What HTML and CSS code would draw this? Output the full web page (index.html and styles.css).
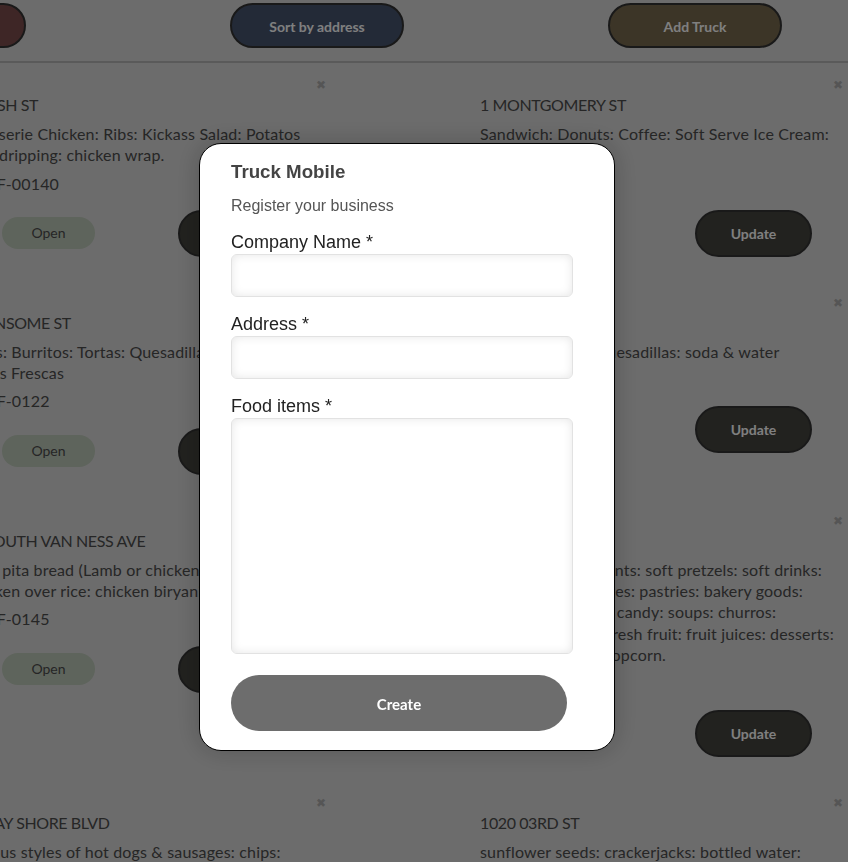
FILE: index.html
```html
<!DOCTYPE html>
<html lang="en">
<head>
<meta charset="utf-8">
<title>Truck Mobile</title>
<link rel="stylesheet" href="styles.css">
</head>
<body>
<div class="page">
  <header class="topbar">
    <button class="pill-btn btn-red">Sort by name</button>
    <button class="pill-btn btn-navy">Sort by address</button>
    <button class="pill-btn btn-olive">Add Truck</button>
  </header>
  <main class="grid">
    <article class="card">
      <div class="close-row"><span class="close">&#10006;</span></div>
      <h2 class="title">1 BUSH ST</h2>
      <p class="food">Rotisserie Chicken: Ribs: Kickass Salad: Potatos with dripping: chicken wrap.</p>
      <p class="permit">2MFF-00140</p>
      <div class="actions"><span class="status">Open</span><button class="update">Update</button></div>
    </article>
    <article class="card">
      <div class="close-row"><span class="close">&#10006;</span></div>
      <h2 class="title">1 MONTGOMERY ST</h2>
      <p class="food">Sandwich: Donuts: Coffee: Soft Serve Ice Cream: Muffins</p>
      <p class="permit">2MFF-00151</p>
      <div class="actions"><span class="status">Open</span><button class="update">Update</button></div>
    </article>
    <article class="card">
      <div class="close-row"><span class="close">&#10006;</span></div>
      <h2 class="title">1 SANSOME ST</h2>
      <p class="food">Tacos: Burritos: Tortas: Quesadillas: Champurrado: Aguas Frescas</p>
      <p class="permit">1MFF-0122</p>
      <div class="actions"><span class="status">Open</span><button class="update">Update</button></div>
    </article>
    <article class="card">
      <div class="close-row"><span class="close">&#10006;</span></div>
      <h2 class="title">101 MISSION ST</h2>
      <p class="food">Tacos: Burritos: Quesadillas: soda &amp; water</p>
      <p class="permit">1MFF-0118</p>
      <div class="actions"><span class="status">Open</span><button class="update">Update</button></div>
    </article>
    <article class="card">
      <div class="close-row"><span class="close">&#10006;</span></div>
      <h2 class="title">10 SOUTH VAN NESS AVE</h2>
      <p class="food">Gyro pita bread (Lamb or chicken): Lamb over rice: Chicken over rice: chicken biryani</p>
      <p class="permit">1MFF-0145</p>
      <div class="actions"><span class="status">Open</span><button class="update">Update</button></div>
    </article>
    <article class="card">
      <div class="close-row"><span class="close">&#10006;</span></div>
      <h2 class="title">50 FREMONT ST</h2>
      <p class="food">Hot dogs: condiments: soft pretzels: soft drinks: cold &amp; hot beverages: pastries: bakery goods: sandwiches: chips: candy: soups: churros: quesadillas: nuts: fresh fruit: fruit juices: desserts: tamales: nachos: popcorn.</p>
      <p class="permit">1MFF-0160</p>
      <div class="actions"><span class="status">Open</span><button class="update">Update</button></div>
    </article>
    <article class="card">
      <div class="close-row"><span class="close">&#10006;</span></div>
      <h2 class="title">10 BAY SHORE BLVD</h2>
      <p class="food">Various styles of hot dogs &amp; sausages: chips: beverages</p>
      <p class="permit">1MFF-0170</p>
      <div class="actions"><span class="status">Open</span><button class="update">Update</button></div>
    </article>
    <article class="card">
      <div class="close-row"><span class="close">&#10006;</span></div>
      <h2 class="title">1020 03RD ST</h2>
      <p class="food">sunflower seeds: crackerjacks: bottled water: peanuts:</p>
      <p class="permit">1MFF-0175</p>
      <div class="actions"><span class="status">Open</span><button class="update">Update</button></div>
    </article>
  </main>
</div>

<div class="overlay"></div>

<form class="modal">
  <h3 class="modal-title">Truck Mobile</h3>
  <p class="modal-sub">Register your business</p>
  <label class="field-label" for="company">Company Name *</label>
  <input class="field" id="company" type="text">
  <label class="field-label" for="address">Address *</label>
  <input class="field" id="address" type="text">
  <label class="field-label" for="food">Food items *</label>
  <textarea class="field field-area" id="food"></textarea>
  <button class="create" type="button">Create</button>
</form>
</body>
</html>
```

FILE: styles.css
```css
* {
  box-sizing: border-box;
}

html, body {
  margin: 0;
  padding: 0;
  height: 100%;
  overflow: hidden;
}

body {
  background: #d8d8d8;
  font-family: Lato, "Noto Sans", sans-serif;
  color: #4c4c4c;
}

.page {
  width: 1200px;
}

.topbar {
  display: flex;
  justify-content: space-around;
  align-items: flex-start;
  width: 1134px;
  margin-left: -250px;
  height: 63px;
  padding-top: 3px;
  border-bottom: 2px solid #b4b4b4;
}

.pill-btn {
  width: 174px;
  height: 45px;
  border: 2px solid #333;
  border-radius: 23px;
  color: #fff;
  font-family: Lato, "Noto Sans", sans-serif;
  font-size: 14px;
  font-weight: 700;
  padding-top: 2px;
}

.btn-red { background: #7c4c4c; }
.btn-navy { background: #46546f; }
.btn-olive { background: #786a4e; }

.grid {
  display: grid;
  grid-template-columns: 397px 397px;
  column-gap: 120px;
  margin-left: -61px;
}

.card {
  padding: 15px 9px 24px 24px;
}

.close-row {
  display: flex;
  justify-content: flex-end;
  padding-right: 1px;
  height: 14px;
}

.close {
  font-size: 12px;
  line-height: 14px;
  color: #aaa;
}

.title {
  margin: 3px 0 0;
  font-size: 16px;
  line-height: 20px;
  font-weight: 400;
  letter-spacing: -0.4px;
  color: #4c4c4c;
}

.food {
  margin: 8px 0 0;
  font-size: 16px;
  line-height: 21.3px;
  letter-spacing: 0.17px;
}

.permit {
  margin: 7px 0 0;
  font-size: 16px;
  line-height: 21.3px;
  letter-spacing: 0.17px;
}

.actions {
  display: flex;
  align-items: center;
  gap: 83px;
  margin-top: 16px;
}

.status {
  margin-left: 39px;
  width: 93px;
  height: 32px;
  border-radius: 16px;
  background: #bcc8b8;
  color: #4c4c4c;
  font-size: 14px;
  line-height: 32px;
  text-align: center;
}

.update {
  width: 117px;
  height: 47px;
  border: 2px solid #333;
  border-radius: 24px;
  background: #44443e;
  color: #fff;
  font-family: Lato, "Noto Sans", sans-serif;
  font-size: 14px;
  font-weight: 700;
}

.overlay {
  position: fixed;
  inset: 0;
  background: rgba(0, 0, 0, 0.5);
}

.modal {
  position: fixed;
  left: 199px;
  top: 143px;
  width: 416px;
  height: 608px;
  padding: 17px 41px 19px 31px;
  background: #fff;
  border: 1px solid #000;
  border-radius: 22px;
  box-shadow: 0 0 24px rgba(0, 0, 0, 0.2);
  font-family: "Liberation Sans", Arial, sans-serif;
}

.modal-title {
  margin: 0;
  font-size: 18.72px;
  line-height: 22px;
  font-weight: 700;
  color: #444;
}

.modal-sub {
  margin: 14px 0 0;
  font-size: 16px;
  line-height: 18px;
  color: #555;
}

.field-label {
  display: block;
  margin-top: 16.5px;
  font-size: 18px;
  line-height: 21px;
  color: #222;
}

.field {
  display: block;
  width: 342px;
  height: 43px;
  margin: 1.5px 0 0;
  border: 1px solid #e2e2e2;
  border-radius: 6px;
  background: #fff;
  box-shadow: inset 0 0 10px rgba(0, 0, 0, 0.1);
  outline: none;
}

.field-area {
  height: 236px;
  resize: none;
}

.create {
  display: block;
  width: 336px;
  height: 56px;
  margin-top: 21px;
  border: none;
  border-radius: 28px;
  background: #6d6d6d;
  color: #fff;
  font-family: Lato, "Noto Sans", sans-serif;
  font-size: 15px;
  font-weight: 700;
  padding-top: 2px;
}
```
